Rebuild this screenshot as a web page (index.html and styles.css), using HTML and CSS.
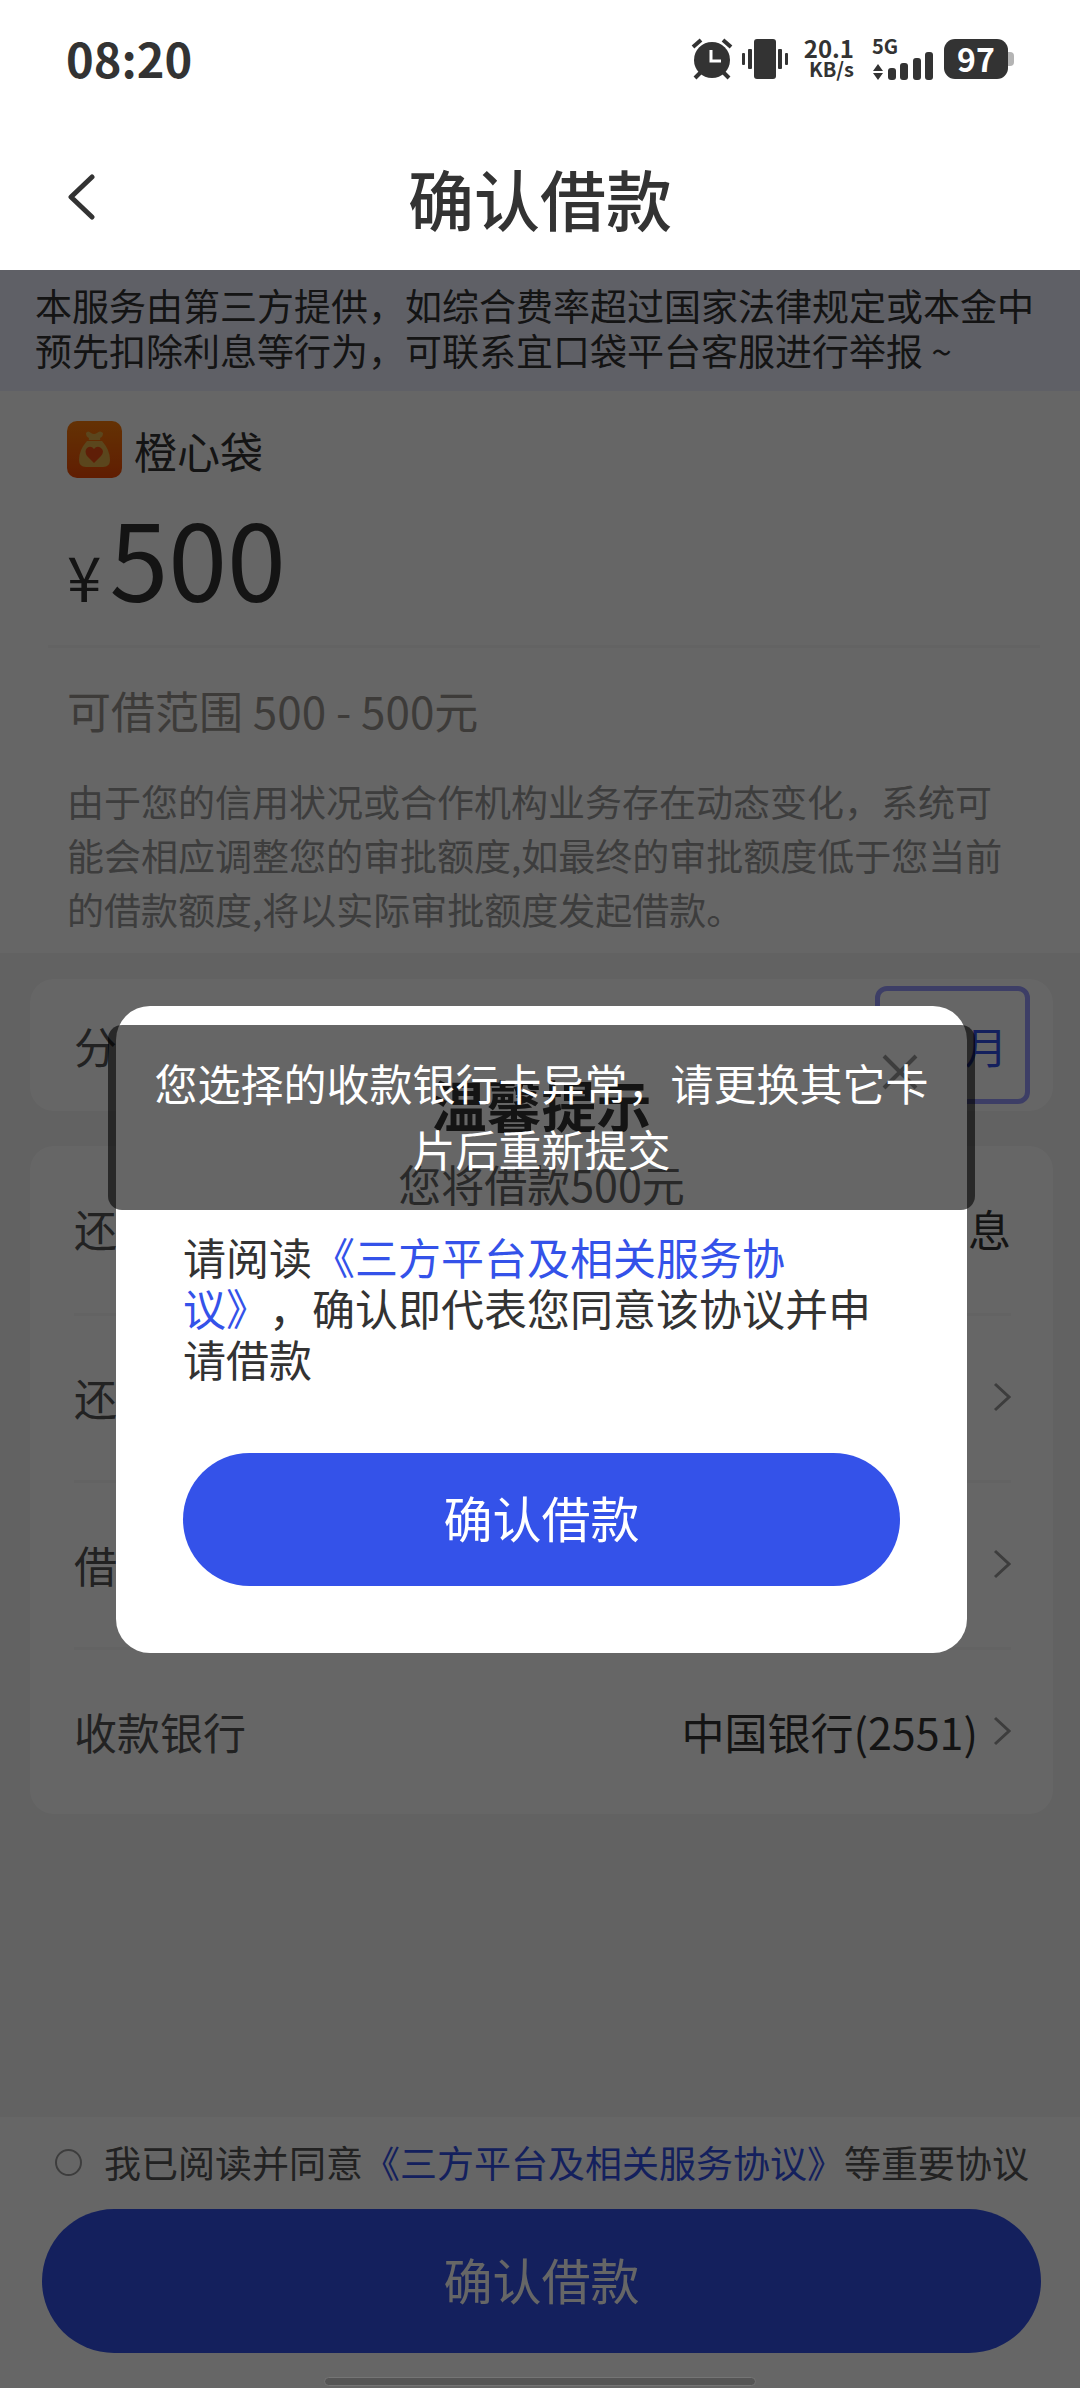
FILE: index.html
```html
<!DOCTYPE html>
<html lang="zh-CN">
<head>
<meta charset="utf-8">
<meta name="viewport" content="width=device-width, initial-scale=1">
<title>确认借款</title>
<link rel="stylesheet" href="styles.css">
</head>
<body>
<div class="page">
  <div class="status">
    <span class="status-time">08:20</span>
    <div class="status-icons">
      <svg class="icon-alarm" viewBox="0 0 42 42" width="42" height="42">
        <g stroke="#333" stroke-width="4" stroke-linecap="butt" fill="none">
          <path d="M2 9 L10 2" /><path d="M32 2 L40 9" /><path d="M4 40 L11 33" /><path d="M38 40 L31 33" />
        </g>
        <circle cx="21" cy="22" r="18" fill="#333" />
        <path d="M20 12 V23 H30" fill="none" stroke="#fff" stroke-width="3" />
      </svg>
      <svg class="icon-vibrate" viewBox="0 0 46 42" width="46" height="42">
        <rect x="12" y="1" width="22" height="40" rx="3" fill="#333" />
        <g fill="#333">
          <rect x="0" y="15" width="3" height="12" rx="1" /><rect x="6" y="11" width="4" height="20" rx="1" />
          <rect x="36" y="11" width="4" height="20" rx="1" /><rect x="43" y="15" width="3" height="12" rx="1" />
        </g>
      </svg>
      <div class="net-speed"><span class="net-value">20.1</span><span class="net-unit">KB/s</span></div>
      <div class="signal">
        <span class="signal-type">5G</span>
        <svg viewBox="0 0 62 28" width="62" height="28">
          <g fill="#333">
            <path d="M6 12 L11 19 H1 Z M1 21 H11 L6 28 Z" />
            <rect x="16" y="16" width="8" height="12" rx="3" /><rect x="28" y="11" width="8" height="17" rx="3" />
            <rect x="41" y="6" width="8" height="22" rx="3" /><rect x="53" y="0" width="8" height="28" rx="3" />
          </g>
        </svg>
      </div>
      <div class="battery"><span class="battery-level">97</span></div>
    </div>
  </div>
  <header class="header">
    <button class="back" type="button" aria-label="返回">
      <svg viewBox="0 0 28 48" width="28" height="48"><path d="M24 4 L3 24 L24 44" fill="none" stroke="#333" stroke-width="5" stroke-linecap="round" stroke-linejoin="round" /></svg>
    </button>
    <h1 class="title">确认借款</h1>
  </header>

  <div class="view">
    <main class="content">
      <p class="notice">本服务由第三方提供，如综合费率超过国家法律规定或本金中预先扣除利息等行为，可联系宜口袋平台客服进行举报 ~</p>
      <section class="loan">
        <div class="brand">
          <svg class="brand-logo" viewBox="0 0 55 57" width="55" height="57">
            <defs><linearGradient id="logo-fill" x1="0" y1="0" x2="0" y2="1"><stop offset="0" stop-color="#fa7d0a" /><stop offset="1" stop-color="#f04a06" /></linearGradient></defs>
            <rect width="55" height="57" rx="10" fill="url(#logo-fill)" />
            <path d="M19 12 Q21 9 24 12 Q27 14 30 12 Q33 9 36 12 Q36 16 33 17 Q34 19 32 19 H23 Q21 19 22 17 Q19 16 19 12 Z" fill="#e3b04a" />
            <path d="M20 20 H35 Q43 29 43 39 Q43 46 36 46 H19 Q12 46 12 39 Q12 29 20 20 Z" fill="#e3b04a" />
            <path d="M27 42 L20 35 Q17 30 20 27 Q24 24 27 28 Q30 24 34 27 Q38 30 34 35 Z" fill="#ee4d12" />
          </svg>
          <span>橙心袋</span>
        </div>
        <p class="amount"><span class="currency">¥</span>500</p>
        <p class="range">可借范围 500 - 500元</p>
        <p class="hint">由于您的信用状况或合作机构业务存在动态变化，系统可能会相应调整您的审批额度,如最终的审批额度低于您当前的借款额度,将以实际审批额度发起借款。</p>
      </section>

      <section class="card term">
        <span class="label">分期期数</span>
        <button class="term-option" type="button">1个月</button>
      </section>

      <section class="card details">
        <div class="row"><span class="label">还款方式</span><span class="value">一次性还本付息</span></div>
        <div class="row"><span class="label">还款计划</span><svg class="chevron" viewBox="0 0 18 30" width="18" height="30"><path d="M2 2 L16 15 L2 28" /></svg></div>
        <div class="row"><span class="label">借款用途</span><svg class="chevron" viewBox="0 0 18 30" width="18" height="30"><path d="M2 2 L16 15 L2 28" /></svg></div>
        <div class="row"><span class="label">收款银行</span><span class="value">中国银行(2551)</span><svg class="chevron" viewBox="0 0 18 30" width="18" height="30"><path d="M2 2 L16 15 L2 28" /></svg></div>
      </section>
    </main>

    <footer class="footer">
      <div class="agree">
        <input class="agree-box" type="checkbox" id="agree">
        <label for="agree">我已阅读并同意<a class="link" href="#">《三方平台及相关服务协议》</a>等重要协议</label>
      </div>
      <button class="primary footer-submit" type="button">确认借款</button>
    </footer>

    <div class="overlay">
      <div class="modal" role="dialog" aria-labelledby="modal-title">
        <button class="close" type="button" aria-label="关闭">
          <svg viewBox="0 0 36 36" width="36" height="36"><path d="M2 2 L34 34 M34 2 L2 34" fill="none" stroke="#999" stroke-width="4" /></svg>
        </button>
        <h2 class="modal-title" id="modal-title">温馨提示</h2>
        <p class="modal-amount">您将借款500元</p>
        <p class="modal-text">请阅读<a class="link" href="#">《三方平台及相关服务协议》</a>，确认即代表您同意该协议并申请借款</p>
        <button class="primary" type="button">确认借款</button>
      </div>
    </div>
    <div class="toast" role="alert">您选择的收款银行卡异常，请更换其它卡片后重新提交</div>
    <div class="home-bar"></div>
  </div>
</div>
</body>
</html>
```
FILE: styles.css
```css
* { box-sizing: border-box; }

body {
  margin: 0;
  background: #fff;
  color: #333;
  font-family: "Noto Sans CJK SC", "Noto Sans", sans-serif;
  font-size: 43px;
  text-spacing-trim: space-all;
}

h1, h2, p { margin: 0; }

button {
  padding: 0;
  border: 0;
  background: none;
  color: inherit;
  font: inherit;
}

svg { display: block; flex: none; }

.page {
  display: flex;
  flex-direction: column;
  min-height: 100vh;
}

/* Status bar */
.status {
  display: flex;
  align-items: center;
  justify-content: space-between;
  height: 118px;
  padding: 0 66px;
}

.status-time { padding-bottom: 4px; font-size: 47px; font-weight: 700; }

.status-icons { display: flex; align-items: center; height: 42px; }
.icon-vibrate { margin-left: 9px; }

.net-speed {
  display: flex;
  flex-direction: column;
  align-items: flex-end;
  margin-left: 16px;
  font-weight: 700;
}
.net-value { font-size: 24px; line-height: 20px; }
.net-unit { font-size: 20px; line-height: 22px; }

.signal { margin-left: 18px; font-weight: 700; }
.signal-type { display: block; height: 14px; font-size: 20px; line-height: 16px; }

.battery {
  display: flex;
  align-items: center;
  justify-content: center;
  position: relative;
  width: 64px;
  height: 40px;
  margin: 0 6px 0 10px;
  border-radius: 11px;
  background: #333;
  color: #fff;
}
.battery::after {
  content: "";
  position: absolute;
  left: 64px;
  top: 13px;
  width: 6px;
  height: 14px;
  border-radius: 0 4px 4px 0;
  background: #b4b4b4;
}
.battery-level { padding-bottom: 2px; font-size: 32px; font-weight: 700; line-height: 38px; }

/* Title bar */
.header {
  display: grid;
  grid-template-columns: 1fr auto 1fr;
  align-items: center;
  height: 152px;
  padding: 6px 68px 0;
}
.back { justify-self: start; }
.title { font-size: 66px; font-weight: 500; line-height: 96px; }

/* Content */
.view {
  display: flex;
  flex: 1;
  flex-direction: column;
  position: relative;
  background: #f5f5f5;
}

.notice {
  padding: 13px 35px 18px;
  background: #eef0ff;
  font-size: 37px;
  line-height: 45px;
}

.loan { padding: 30px 66px 17px 67px; background: #fff; }

.brand {
  display: flex;
  align-items: center;
  gap: 12px;
  font-size: 43px;
  line-height: 56px;
}

.amount {
  margin: 18px -26px 0 -19px;
  padding: 0 19px 29px;
  border-bottom: 3px solid #f7f7f7;
  font-size: 106px;
  line-height: 120px;
}
.currency { margin-right: 8px; font-size: 62px; line-height: 1; }

.range { margin-top: 32px; color: #999590; font-size: 44px; line-height: 60px; }
.hint { margin-top: 34px; color: #999; font-size: 37px; line-height: 54px; }

.card {
  margin: 26px 27px 0 30px;
  padding: 0 42px 0 44px;
  border-radius: 24px;
  background: #fff;
}

.term {
  display: flex;
  align-items: center;
  justify-content: space-between;
  height: 132px;
  padding-right: 23px;
}
.term-option {
  width: 155px;
  height: 118px;
  border: 5px solid #9a9cff;
  border-radius: 12px;
  color: #3452e9;
}

.details { margin-top: 35px; }

.row {
  display: flex;
  align-items: center;
  height: 167px;
  padding-bottom: 3px;
}
.row + .row { border-top: 3px solid #f7f7f7; }
.label { margin-right: auto; color: #555; }
.chevron { margin-left: 15px; fill: none; stroke: #999; stroke-width: 3; }

/* Footer */
.footer {
  margin-top: auto;
  padding: 18px 39px 35px 42px;
  background: #fff;
}
.agree {
  display: flex;
  align-items: center;
  gap: 22px;
  padding-left: 13px;
  font-size: 37px;
  line-height: 54px;
  white-space: nowrap;
  color: #555;
}
.agree-box {
  appearance: none;
  width: 27px;
  height: 27px;
  margin: 0;
  border: 2px solid #999;
  border-radius: 50%;
}
.link { color: #3452e9; text-decoration: none; }

.primary {
  width: 100%;
  height: 133px;
  padding-bottom: 6px;
  border-radius: 72px;
  background: #3452e9;
  color: #fff;
  font-size: 49px;
}
.footer-submit { height: 144px; margin-top: 20px; }

/* Dialog */
.overlay {
  display: flex;
  align-items: center;
  justify-content: center;
  position: absolute;
  inset: 0;
  padding: 0 113px 0 116px;
  background: rgba(0, 0, 0, 0.6);
}
.modal {
  position: relative;
  width: 100%;
  padding: 61px 67px 67px;
  border-radius: 34px;
  background: #fff;
}
.close { position: absolute; top: 48px; right: 49px; }
.modal-title {
  font-size: 55px;
  font-weight: 700;
  line-height: 72px;
  text-align: center;
}
.modal-amount { margin-top: 14px; color: #666; line-height: 60px; text-align: center; }
.modal-text { margin: 18px 0 69px; line-height: 51px; }

.toast {
  position: absolute;
  top: 755px;
  left: 10%;
  right: 105px;
  padding: 24px 40px 29px;
  border-radius: 14px;
  background: rgba(0, 0, 0, 0.6);
  color: #fff;
  line-height: 66px;
  text-align: center;
}

.home-bar {
  position: absolute;
  bottom: 2px;
  left: 30%;
  width: 40%;
  height: 9px;
  border: 1px solid #757575;
  border-radius: 5px;
  background: #555;
}
```
